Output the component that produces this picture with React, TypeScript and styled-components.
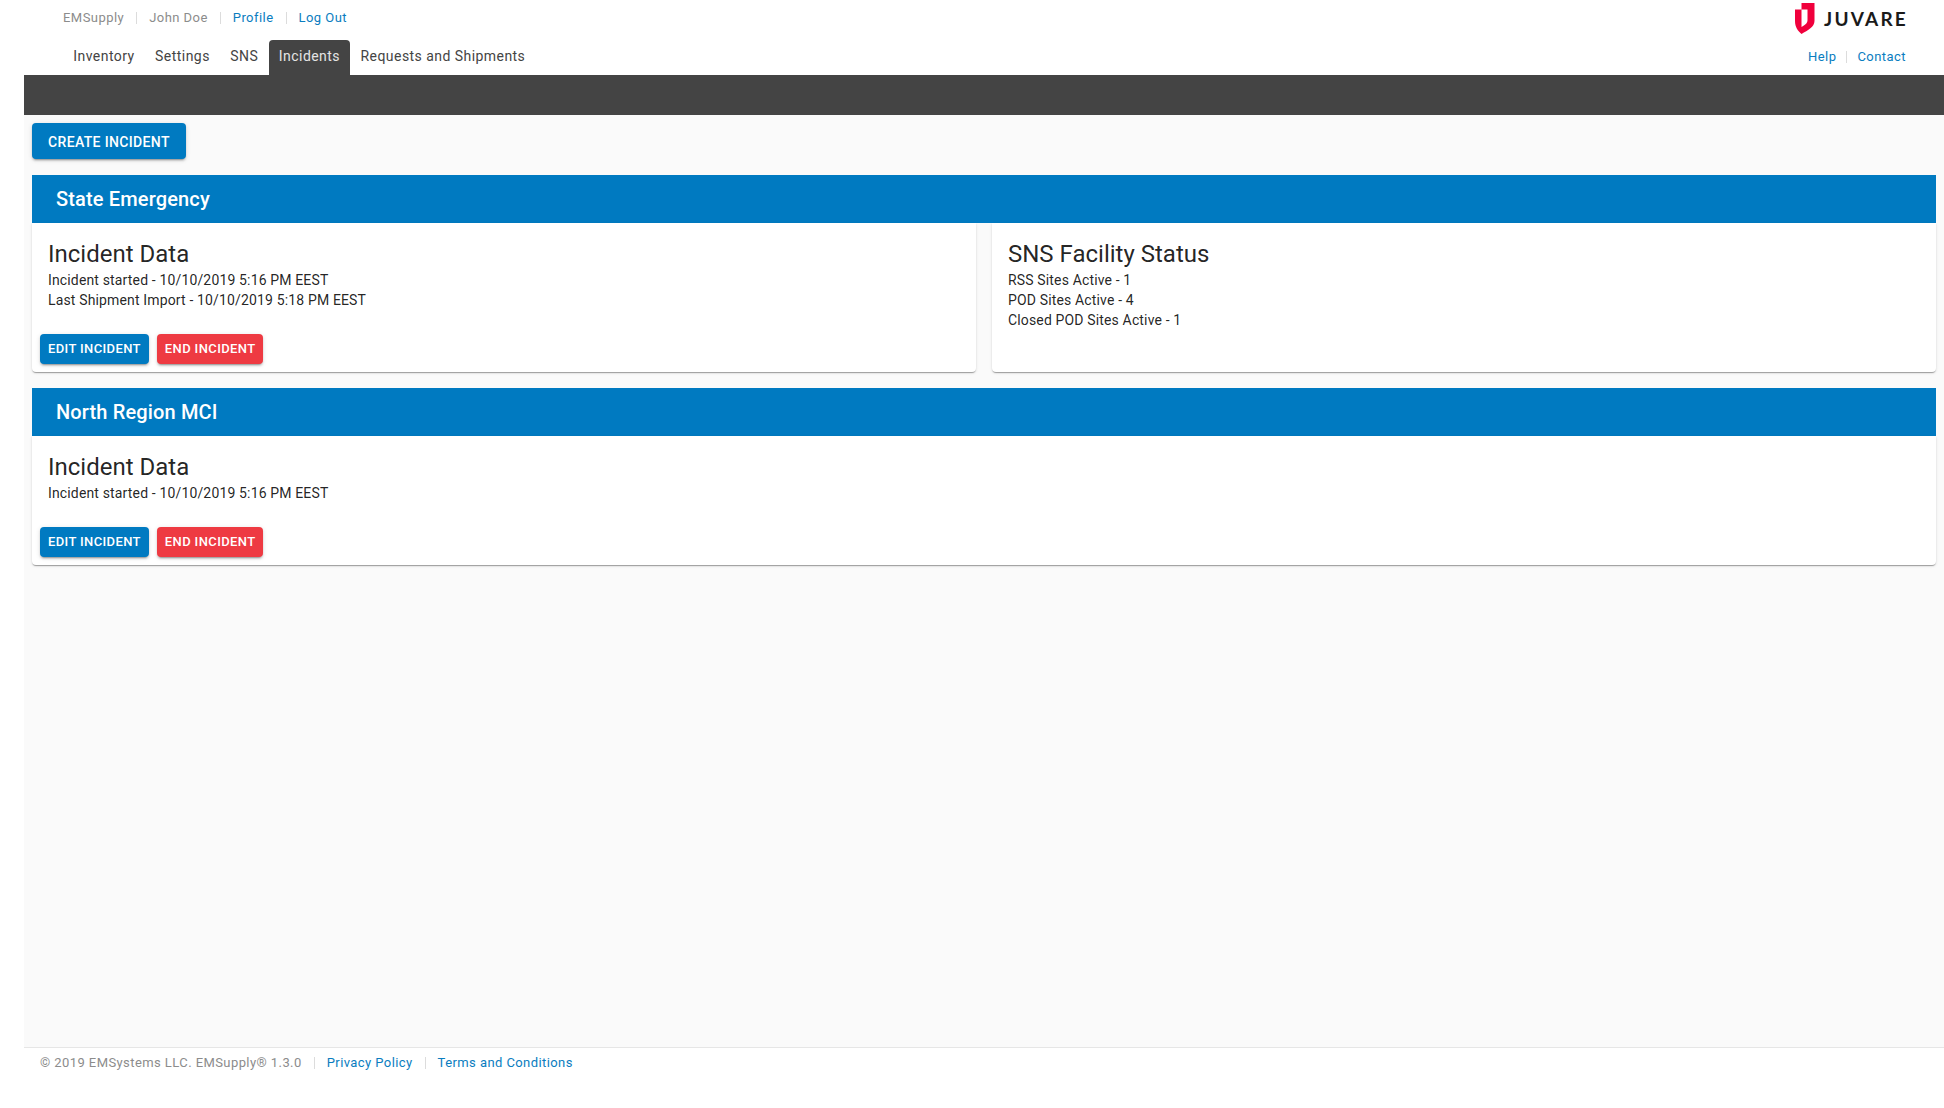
import styled, { createGlobalStyle } from 'styled-components';

const GlobalStyle = createGlobalStyle`
  html, body {
    margin: 0;
    padding: 0;
    background: #fff;
  }
  * {
    box-sizing: border-box;
  }
`;

const Page = styled.div`
  display: flex;
  flex-direction: column;
  min-height: 1108px;
  padding-left: 24px;
  font-family: Roboto, sans-serif;
`;

const TopBar = styled.header`
  display: flex;
  justify-content: space-between;
  height: 75px;
  font-family: Roboto, sans-serif;
  font-size: 13px;
  letter-spacing: 0.45px;
`;

const TopLeft = styled.div`
  display: flex;
  flex-direction: column;
  padding-left: 39px;
`;

const MetaRow = styled.div`
  display: flex;
  align-items: center;
  height: 35px;
  padding-bottom: 1px;
`;

const MetaItem = styled.span<{ $link?: boolean; $tight?: boolean }>`
  color: ${(p) => (p.$link ? '#0a7dc0' : '#8c8c8c')};
  & + span::before {
    content: '';
    display: inline-block;
    width: 1px;
    height: 12px;
    margin: 0 ${(p) => (p.$tight ? 10 : 12)}px;
    background: #dcdcdc;
    vertical-align: -2px;
  }
`;

const Nav = styled.nav`
  display: flex;
  height: 35px;
  margin-top: 5px;
  font-size: 14px;
`;

const NavTab = styled.a<{ $active?: boolean }>`
  display: flex;
  align-items: center;
  padding: 0 10.25px 3px;
  border-radius: 4px 4px 0 0;
  color: ${(p) => (p.$active ? '#e4e4e4' : '#444')};
  background: ${(p) => (p.$active ? '#444' : 'transparent')};
`;

const TopRight = styled.div`
  display: flex;
  flex-direction: column;
  align-items: flex-end;
  padding-right: 38px;
`;

const Logo = styled.div`
  display: flex;
  align-items: center;
  gap: 9px;
  height: 35px;
  margin-right: -2px;
  padding-top: 1px;
`;

const LogoText = styled.span`
  font-family: Lato, sans-serif;
  font-size: 19px;
  font-weight: 700;
  letter-spacing: 2.2px;
  color: #1a1a1a;
`;

const HelpRow = styled(MetaRow)`
  height: 35px;
  margin-top: 5px;
  padding-bottom: 3px;
`;

const DarkBar = styled.div`
  height: 40px;
  background: #444;
`;

const Main = styled.main`
  flex: 1;
  display: flex;
  flex-direction: column;
  align-items: stretch;
  padding: 8px 8px 0;
  background: #fafafa;
`;

const Button = styled.button<{ $danger?: boolean; $small?: boolean }>`
  height: ${(p) => (p.$small ? 30 : 36)}px;
  padding: ${(p) => (p.$small ? '0 8px 1px' : '1px 16px 0')};
  border: 0;
  border-radius: 4px;
  font-family: Roboto, sans-serif;
  font-size: ${(p) => (p.$small ? 13 : 14)}px;
  font-weight: 500;
  letter-spacing: ${(p) => (p.$small ? 0.37 : 0.35)}px;
  color: #fff;
  background: ${(p) => (p.$danger ? '#ee3a42' : '#007ac1')};
  box-shadow: 0 3px 1px -2px rgba(0, 0, 0, 0.2), 0 2px 2px 0 rgba(0, 0, 0, 0.14), 0 1px 5px 0 rgba(0, 0, 0, 0.12);
`;

const CreateRow = styled.div`
  display: flex;
  margin-bottom: 16px;
`;

const Section = styled.section`
  margin-bottom: 16px;
`;

const SectionHeader = styled.h2`
  display: flex;
  align-items: center;
  height: 48px;
  margin: 0;
  padding-left: 24px;
  font-size: 20px;
  font-weight: 500;
  letter-spacing: 0.15px;
  color: #fff;
  background: #007ac1;
`;

const CardRow = styled.div`
  display: flex;
  gap: 16px;
`;

const Card = styled.div`
  flex: 1;
  display: flex;
  flex-direction: column;
  padding: 15px 16px 0;
  border-radius: 0 0 4px 4px;
  background: #fff;
  box-shadow: 0 2px 1px -1px rgba(0, 0, 0, 0.2), 0 1px 1px 0 rgba(0, 0, 0, 0.14), 0 1px 3px 0 rgba(0, 0, 0, 0.12);
`;

const CardTitle = styled.h3`
  margin: 0;
  font-size: 24px;
  font-weight: 400;
  line-height: 32px;
  color: rgba(0, 0, 0, 0.87);
`;

const CardLine = styled.p`
  margin: 0;
  font-size: 14px;
  line-height: 20px;
  letter-spacing: 0.15px;
  color: rgba(0, 0, 0, 0.87);
`;

const CardActions = styled.div`
  display: flex;
  gap: 8px;
  margin: 24px -8px 8px;
`;

const Footer = styled.footer`
  display: flex;
  align-items: center;
  height: 61px;
  padding: 0 0 32px 16px;
  border-top: 1px solid #e6e6e6;
  font-family: Roboto, sans-serif;
  font-size: 13px;
  letter-spacing: 0.42px;
`;

const LogoMark = () => (
  <svg width="20" height="31" viewBox="0 0 20 31">
    <path
      fill="#f0003c"
      d="M6.5 0H19.5V18C19.5 24 13 27 6.5 31C3 28 0 24 0 18V6.5H6.5V24C10 22 12.5 20.5 12.5 17V6.5H6.5Z"
    />
  </svg>
);

const IncidentActions = () => (
  <CardActions>
    <Button $small>EDIT INCIDENT</Button>
    <Button $small $danger>END INCIDENT</Button>
  </CardActions>
);

export default function App() {
  return (
    <Page>
      <GlobalStyle />
      <TopBar>
        <TopLeft>
          <MetaRow>
            <MetaItem>EMSupply</MetaItem>
            <MetaItem>John Doe</MetaItem>
            <MetaItem $link>Profile</MetaItem>
            <MetaItem $link>Log Out</MetaItem>
          </MetaRow>
          <Nav>
            <NavTab>Inventory</NavTab>
            <NavTab>Settings</NavTab>
            <NavTab>SNS</NavTab>
            <NavTab $active>Incidents</NavTab>
            <NavTab>Requests and Shipments</NavTab>
          </Nav>
        </TopLeft>
        <TopRight>
          <Logo>
            <LogoMark />
            <LogoText>JUVARE</LogoText>
          </Logo>
          <HelpRow>
            <MetaItem $link $tight>Help</MetaItem>
            <MetaItem $link>Contact</MetaItem>
          </HelpRow>
        </TopRight>
      </TopBar>
      <DarkBar />
      <Main>
        <CreateRow>
          <Button>CREATE INCIDENT</Button>
        </CreateRow>
        <Section>
          <SectionHeader>State Emergency</SectionHeader>
          <CardRow>
            <Card>
              <CardTitle>Incident Data</CardTitle>
              <CardLine>Incident started - 10/10/2019 5:16 PM EEST</CardLine>
              <CardLine>Last Shipment Import - 10/10/2019 5:18 PM EEST</CardLine>
              <IncidentActions />
            </Card>
            <Card>
              <CardTitle>SNS Facility Status</CardTitle>
              <CardLine>RSS Sites Active - 1</CardLine>
              <CardLine>POD Sites Active - 4</CardLine>
              <CardLine>Closed POD Sites Active - 1</CardLine>
            </Card>
          </CardRow>
        </Section>
        <Section>
          <SectionHeader>North Region MCI</SectionHeader>
          <CardRow>
            <Card>
              <CardTitle>Incident Data</CardTitle>
              <CardLine>Incident started - 10/10/2019 5:16 PM EEST</CardLine>
              <IncidentActions />
            </Card>
          </CardRow>
        </Section>
      </Main>
      <Footer>
        <MetaItem>© 2019 EMSystems LLC. EMSupply® 1.3.0</MetaItem>
        <MetaItem $link>Privacy Policy</MetaItem>
        <MetaItem $link>Terms and Conditions</MetaItem>
      </Footer>
    </Page>
  );
}
